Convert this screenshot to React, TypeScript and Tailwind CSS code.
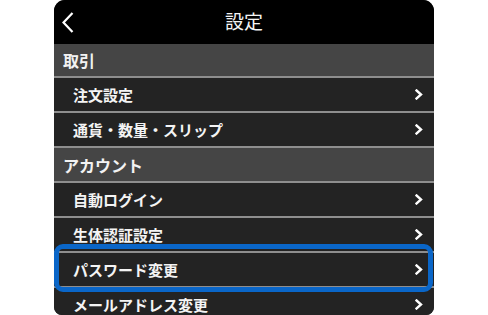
import React from "react";

const font = { fontFamily: '"Noto Sans CJK JP", "Noto Sans", sans-serif' };

function Chevron() {
  return (
    <svg width="8" height="11" viewBox="0 0 8 11" className="shrink-0">
      <polyline points="1.5,1.5 6,5.5 1.5,9.5" fill="none" stroke="#ffffff" strokeWidth="2.4" strokeLinecap="square" strokeLinejoin="miter" />
    </svg>
  );
}

function Section({ label, first }: { label: string; first?: boolean }) {
  return (
    <div className={`flex items-center bg-[#454545] pl-[9px] ${first ? "h-[32px]" : "h-[35px] border-t-2 border-[#8e8e8e]"}`}>
      <span className="text-[16px] font-bold leading-none text-[#f2f2f2]">{label}</span>
    </div>
  );
}

function Row({ label, highlight }: { label: string; highlight?: boolean }) {
  return (
    <div className={`relative flex h-[35px] items-center justify-between border-t-2 border-[#8e8e8e] bg-[#232323] pl-[19px] pr-[11px] ${highlight ? "z-10" : ""}`}>
      <span className="text-[15px] font-bold leading-none text-[#f4f4f4]">{label}</span>
      <Chevron />
      {highlight && (
        <div className="pointer-events-none absolute -top-[9px] -bottom-[6px] left-0 right-[1px] z-10 rounded-[9px] border-[5px] border-[#0a66c8]" />
      )}
    </div>
  );
}

export default function App() {
  return (
    <div className="flex h-[315px] w-[488px] justify-start bg-white pl-[54px]" style={font}>
      <div className="h-[315px] w-[380px] overflow-hidden rounded-t-[11px] rounded-b-[8px] bg-[#232323]">
        <div className="relative flex h-[44px] items-center justify-center bg-black">
          <svg width="12" height="21" viewBox="0 0 12 21" className="absolute left-[8px] top-[12px]">
            <polyline points="10.5,1 1.5,10.5 10.5,20" fill="none" stroke="#ffffff" strokeWidth="2.2" />
          </svg>
          <span className="-mt-[3px] text-[19px] leading-none text-[#f4f4f4]">設定</span>
        </div>
        <Section label="取引" first />
        <Row label="注文設定" />
        <Row label="通貨・数量・スリップ" />
        <Section label="アカウント" />
        <Row label="自動ログイン" />
        <Row label="生体認証設定" />
        <Row label="パスワード変更" highlight />
        <Row label="メールアドレス変更" />
      </div>
    </div>
  );
}
